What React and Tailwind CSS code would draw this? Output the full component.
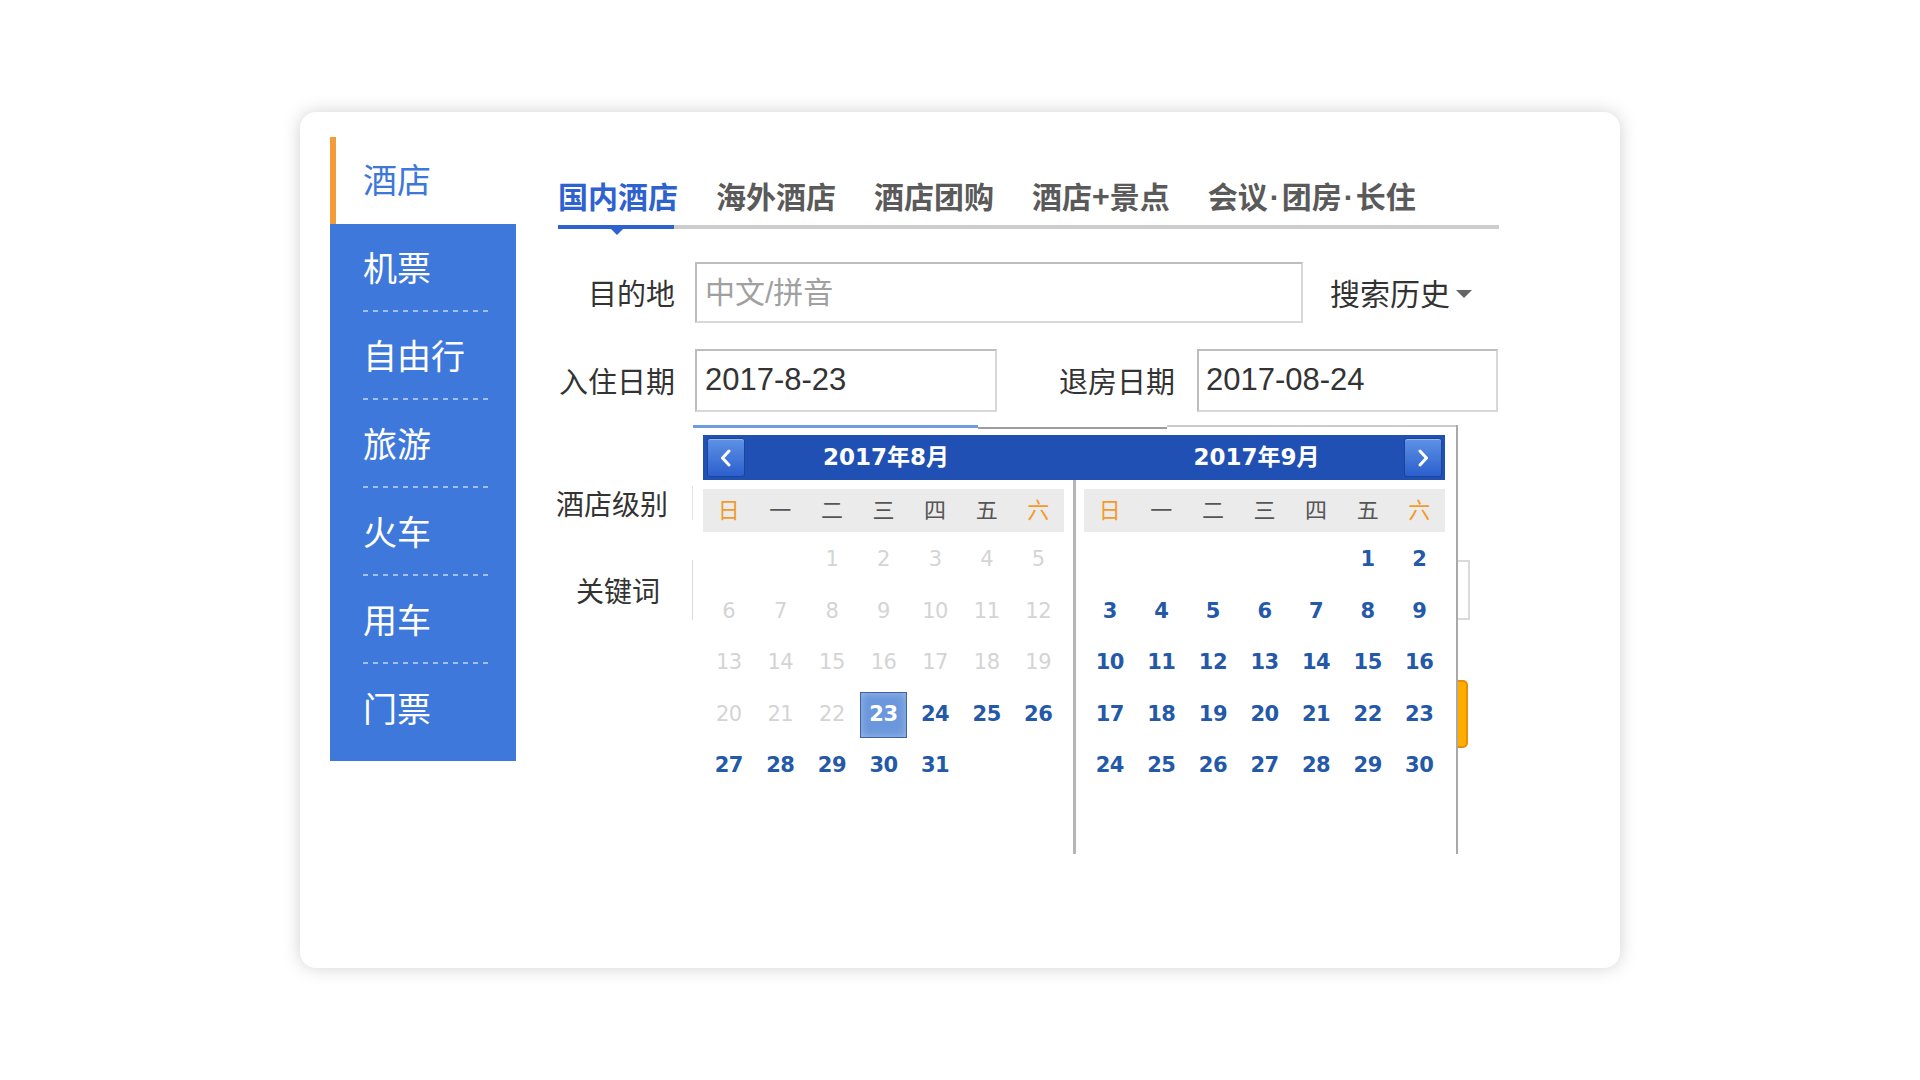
import React from "react";

const SIDE = ["机票", "自由行", "旅游", "火车", "用车", "门票"];
const TABS = ["国内酒店", "海外酒店", "酒店团购", "酒店+景点"];
const WEEK = ["日", "一", "二", "三", "四", "五", "六"];

function Chevron({ dir }) {
  return (
    <svg width="14" height="18" viewBox="0 0 14 18">
      <path
        d={dir === "left" ? "M10 2 L3.5 9 L10 16" : "M4 2 L10.5 9 L4 16"}
        fill="none"
        stroke="#fff"
        strokeWidth="3"
        strokeLinecap="round"
        strokeLinejoin="round"
      />
    </svg>
  );
}

function NavButton({ dir }) {
  return (
    <div className="w-[38px] h-[39px] shrink-0 rounded-[3px] border border-[#1a4599] bg-[linear-gradient(#5d92e6,#2c5fcc)] shadow-[inset_0_1px_0_rgba(255,255,255,0.35)] flex items-center justify-center">
      <Chevron dir={dir} />
    </div>
  );
}

function MonthGrid({ lead, count, disabledBefore, selected }) {
  const cells = [...Array(lead).fill(null), ...Array.from({ length: count }, (_, i) => i + 1)];
  return (
    <div className="w-[361px]">
      <div className="grid grid-cols-7 h-[43px] items-center pb-[5px] bg-[#ebebeb] text-[22px]">
        {WEEK.map((w, i) => (
          <div key={w} className={`text-center ${i === 0 || i === 6 ? "text-[#f39a2b]" : "text-[#555]"}`}>
            {w}
          </div>
        ))}
      </div>
      <div className="grid grid-cols-7 auto-rows-[51.6px] mt-[2px] font-['DejaVu_Sans',sans-serif] text-[21px] tracking-[-0.5px]">
        {cells.map((d, i) => {
          if (d === null) return <div key={"e" + i} />;
          if (d === selected) {
            return (
              <div key={d} className="flex items-center justify-center">
                <span className="w-[47px] h-[46px] flex items-center justify-center bg-[#6b97dc] border border-[#3d63a3] shadow-[inset_0_0_8px_rgba(255,255,255,0.35)] text-white font-bold">
                  {d}
                </span>
              </div>
            );
          }
          const off = d < disabledBefore;
          return (
            <div
              key={d}
              className={`flex items-center justify-center ${off ? "text-[#d4d4d4]" : "text-[#2458a8] font-bold"}`}
            >
              {d}
            </div>
          );
        })}
      </div>
    </div>
  );
}

function Calendar() {
  return (
    <div className="absolute left-[393px] top-[313px] w-[765px] h-[429px] bg-white border-r-2 border-[#a9a9a9] z-10">
      {/* top edge */}
      <div className="flex h-[3px]">
        <div className="w-[285px] h-[3px] bg-[#6f9be0]" />
        <div className="w-[189px] h-[2px] mt-[2px] bg-[#9d9d9d]" />
        <div className="flex-1 h-[2px] bg-[#cbcbcb]" />
      </div>

      {/* header bar */}
      <div className="ml-[10px] mt-[7px] w-[742px] h-[45px] bg-[#2150b4] flex items-center text-white font-bold text-[23px] font-['DejaVu_Sans','Noto_Sans_CJK_SC',sans-serif]">
        <div className="w-[370px] flex items-center pl-[4px]">
          <NavButton dir="left" />
          <div className="flex-1 text-center">2017年8月</div>
          <div className="w-[46px]" />
        </div>
        <div className="flex-1 flex items-center pr-[3px]">
          <div className="w-[36px]" />
          <div className="flex-1 text-center">2017年9月</div>
          <NavButton dir="right" />
        </div>
      </div>

      {/* months */}
      <div className="flex h-[374px]">
        <div className="ml-[10px] pt-[9px]">
          <MonthGrid lead={2} count={31} disabledBefore={23} selected={23} />
        </div>
        <div className="ml-[9px] w-[3px] bg-[#b5b5b5]" />
        <div className="ml-[8px] pt-[9px]">
          <MonthGrid lead={5} count={30} disabledBefore={0} selected={null} />
        </div>
      </div>
    </div>
  );
}

function Label({ children, size = "text-[29px]", pr = "" }) {
  return (
    <div className={`w-[117px] shrink-0 flex justify-end whitespace-nowrap text-[#333] ${size} ${pr}`}>
      {children}
    </div>
  );
}

const Dot = () => <span className="font-['Liberation_Sans',sans-serif] px-[2px]">·</span>;

export default function App() {
  return (
    <div className="min-h-screen bg-white flex items-center justify-center font-['Noto_Sans_CJK_SC',sans-serif]">
      <div className="relative w-[1320px] h-[856px] bg-white rounded-[16px] shadow-[0_0_18px_rgba(0,0,0,0.18)] flex items-start pl-[30px] pt-[25px]">
        {/* sidebar */}
        <aside className="w-[186px] shrink-0">
          <div className="h-[87px] border-l-[6px] border-[#f29d3a] flex items-center pl-[27px] pb-[4px] text-[34px] text-[#3d77da]">
            酒店
          </div>
          <div className="bg-[#3f78db] pb-[9px]">
            {SIDE.map((s, i) => (
              <div key={s} className="ml-[33px] w-[126px] h-[88px] flex flex-col">
                <div className="flex-1 flex items-center pb-[2px] text-[34px] text-white">{s}</div>
                {i < SIDE.length - 1 && (
                  <div className="h-[2px] bg-[repeating-linear-gradient(to_right,#a3bdee_0_5px,transparent_5px_10px)]" />
                )}
              </div>
            ))}
          </div>
        </aside>

        {/* content */}
        <div className="ml-[42px] w-[941px] pt-[43px]">
          <div className="flex gap-[38px] pb-[12px] text-[30px] leading-[30px] font-bold text-[#5a5a5a] whitespace-nowrap">
            {TABS.map((t, i) => (
              <div key={t} className={i === 0 ? "text-[#2d62cf]" : ""}>
                {t}
              </div>
            ))}
            <div>
              会议<Dot />团房<Dot />长住
            </div>
          </div>
          <div className="flex">
            <div className="relative w-[116px] h-[4px] bg-[#2d62cf]">
              <div className="absolute left-[53px] top-[4px] w-0 h-0 border-x-[6px] border-x-transparent border-t-[6px] border-t-[#2d62cf]" />
            </div>
            <div className="flex-1 h-[4px] bg-[#cdcdcd]" />
          </div>

          {/* row 1 */}
          <div className="flex items-center mt-[33px] h-[61px]">
            <Label>目的地</Label>
            <div className="ml-[20px] w-[608px] h-[61px] border-2 border-[#d8d8d8] border-t-[#bdbdbd] border-l-[#bdbdbd] flex items-center pl-[8px] text-[30px] text-[#a0a0a0] font-['Liberation_Sans','Noto_Sans_CJK_SC',sans-serif]">
              中文/拼音
            </div>
            <div className="ml-[27px] flex items-center text-[30px] text-[#333] whitespace-nowrap">
              搜索历史
              <span className="ml-[6px] mt-[2px] w-0 h-0 border-x-[8px] border-x-transparent border-t-[8px] border-t-[#666]" />
            </div>
          </div>

          {/* row 2 */}
          <div className="flex items-center mt-[26px] h-[63px]">
            <Label>入住日期</Label>
            <div className="ml-[20px] w-[302px] h-[63px] border-2 border-[#d8d8d8] border-t-[#bdbdbd] border-l-[#bdbdbd] flex items-center pl-[8px] text-[31px] text-[#333] font-['Liberation_Sans',sans-serif]">
              2017-8-23
            </div>
            <div className="ml-[62px] whitespace-nowrap text-[29px] text-[#333]">退房日期</div>
            <div className="ml-[22px] w-[301px] h-[63px] border-2 border-[#d8d8d8] border-t-[#bdbdbd] border-l-[#bdbdbd] flex items-center pl-[7px] text-[31px] text-[#333] font-['Liberation_Sans',sans-serif]">
              2017-08-24
            </div>
          </div>

          {/* row 3 */}
          <div className="flex items-center mt-[60px] h-[62px]">
            <Label size="text-[28px]" pr="pr-[7px]">酒店级别</Label>
            <div className="ml-[17px] h-[34px] border-l border-[#e3e3e3]" />
          </div>

          {/* row 4 */}
          <div className="flex items-center mt-[26px] h-[60px]">
            <Label size="text-[28px]" pr="pr-[15px]">关键词</Label>
            <div className="ml-[17px] w-[778px] h-[60px] border-2 border-[#dadada]" />
          </div>

          {/* row 5 */}
          <div className="flex mt-[60px] h-[68px] pr-[31px]">
            <div className="ml-auto w-[220px] h-[68px] rounded-[5px] bg-[#ffae00] border-2 border-[#e88d06]" />
          </div>
        </div>

        <Calendar />
      </div>
    </div>
  );
}
